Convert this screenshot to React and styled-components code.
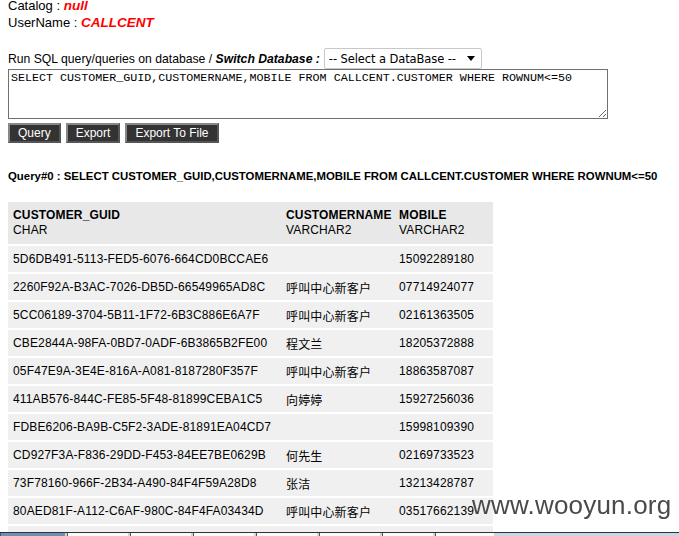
import React from 'react'
import styled, { createGlobalStyle } from 'styled-components'

const rows = [
  ['5D6DB491-5113-FED5-6076-664CD0BCCAE6', '', '15092289180'],
  ['2260F92A-B3AC-7026-DB5D-66549965AD8C', '呼叫中心新客户', '07714924077'],
  ['5CC06189-3704-5B11-1F72-6B3C886E6A7F', '呼叫中心新客户', '02161363505'],
  ['CBE2844A-98FA-0BD7-0ADF-6B3865B2FE00', '程文兰', '18205372888'],
  ['05F47E9A-3E4E-816A-A081-8187280F357F', '呼叫中心新客户', '18863587087'],
  ['411AB576-844C-FE85-5F48-81899CEBA1C5', '向婷婷', '15927256036'],
  ['FDBE6206-BA9B-C5F2-3ADE-81891EA04CD7', '', '15998109390'],
  ['CD927F3A-F836-29DD-F453-84EE7BE0629B', '何先生', '02169733523'],
  ['73F78160-966F-2B34-A490-84F4F59A28D8', '张洁', '13213428787'],
  ['80AED81F-A112-C6AF-980C-84F4FA03434D', '呼叫中心新客户', '03517662139'],
  ['', '', ''],
]

const columns = [
  { name: 'CUSTOMER_GUID', type: 'CHAR', width: 273 },
  { name: 'CUSTOMERNAME', type: 'VARCHAR2', width: 113 },
  { name: 'MOBILE', type: 'VARCHAR2', width: 99 },
]

const sql = 'SELECT CUSTOMER_GUID,CUSTOMERNAME,MOBILE FROM CALLCENT.CUSTOMER WHERE ROWNUM<=50'

const taskButtons = [64, 60, 60, 60, 60, 60, 50, 58]

function App() {
  return (
    <>
      <GlobalStyle />
      <Page>
        <InfoLine>Catalog : <Value>null</Value></InfoLine>
        <InfoLine>UserName : <Value>CALLCENT</Value></InfoLine>

        <SwitchRow>
          <span>Run SQL query/queries on database / <Em>Switch Database :</Em></span>
          <DbSelect>
            <span>-- Select a DataBase --</span>
            <svg width="8" height="5" viewBox="0 0 8 5"><path d="M0 0h8L4 5z" fill="#000" /></svg>
          </DbSelect>
        </SwitchRow>
        <SqlBox defaultValue={sql} spellCheck={false} />

        <ButtonRow>
          <DarkButton>Query</DarkButton>
          <DarkButton>Export</DarkButton>
          <DarkButton>Export To File</DarkButton>
        </ButtonRow>

        <QueryTitle>Query#0 : {sql}</QueryTitle>

        <ResultTable>
          <colgroup>
            {columns.map(c => <col key={c.name} style={{ width: c.width }} />)}
          </colgroup>
          <thead>
            <tr>
              {columns.map(c => (
                <HeadCell key={c.name}>
                  <b>{c.name}</b>
                  <br />
                  {c.type}
                </HeadCell>
              ))}
            </tr>
          </thead>
          <tbody>
            {rows.map((r, i) => (
              <tr key={i}>
                {r.map((v, j) => <Cell key={j}>{v}</Cell>)}
              </tr>
            ))}
          </tbody>
        </ResultTable>
      </Page>

      <Watermark>www.wooyun.org</Watermark>
      <Taskbar>
        {taskButtons.map((w, i) => <TaskItem key={i} w={w} first={i === 0} />)}
      </Taskbar>
    </>
  )
}

export default App

const GlobalStyle = createGlobalStyle`
  html, body {
    margin: 0;
    padding: 0;
    background: #fff;
    overflow: hidden;
  }
  body {
    font-family: "Liberation Sans", Arial, sans-serif;
    font-size: 13px;
    color: #000;
  }
`

const Page = styled.div`
  display: flex;
  flex-direction: column;
  align-items: flex-start;
  padding: 0 8px;
  margin-top: -3px;
`

const InfoLine = styled.div`
  line-height: 17px;
  height: 17px;
`

const Value = styled.span`
  color: #ff0000;
  font-weight: bold;
  font-style: italic;
  font-size: 13.5px;
`

const SwitchRow = styled.div`
  display: flex;
  align-items: center;
  gap: 4px;
  margin-top: 17px;
  height: 21px;
  font-size: 12.2px;
  white-space: nowrap;
`

const Em = styled.span`
  font-weight: bold;
  font-style: italic;
`

const DbSelect = styled.div`
  display: flex;
  align-items: center;
  justify-content: space-between;
  box-sizing: border-box;
  width: 158px;
  height: 21px;
  padding: 0 6px 0 4px;
  border: 1px solid #c8c8c8;
  border-radius: 2px;
  font-family: "DejaVu Sans", Tahoma, sans-serif;
  font-size: 11.5px;
  letter-spacing: -0.1px;
`

const SqlBox = styled.textarea`
  box-sizing: border-box;
  width: 600px;
  height: 50px;
  margin: 0;
  padding: 2px;
  border: 1px solid #707070;
  font-family: "Liberation Mono", "Courier New", monospace;
  font-size: 11.7px;
  line-height: 13px;
  resize: both;
  outline: none;
`

const ButtonRow = styled.div`
  display: flex;
  gap: 5px;
  margin-top: 4px;
`

const DarkButton = styled.button`
  height: 20px;
  padding: 0 8px;
  background: #333;
  color: #fff;
  border: 2px solid;
  border-color: #888 #555 #555 #888;
  font-family: "Liberation Sans", Arial, sans-serif;
  font-size: 12px;
  line-height: 14px;
  cursor: pointer;
`

const QueryTitle = styled.div`
  margin-top: 26px;
  font-weight: bold;
  font-size: 11.4px;
  line-height: 15px;
  white-space: nowrap;
`

const ResultTable = styled.table`
  width: 485px;
  margin-top: 18px;
  border-collapse: collapse;
  table-layout: fixed;
  font-size: 12px;
  letter-spacing: 0.15px;
`

const HeadCell = styled.th`
  background: #e8e8e8;
  text-align: left;
  font-weight: normal;
  padding: 5px;
  line-height: 15px;
  height: 32px;
  border-bottom: 2px solid #fff;
  vertical-align: middle;
  white-space: nowrap;
  b {
    font-weight: bold;
  }
`

const Cell = styled.td`
  background: #f0f0f0;
  padding: 0 5px;
  height: 26px;
  border-bottom: 2px solid #fff;
  white-space: nowrap;
  font-family: "Liberation Sans", Arial, "Noto Sans CJK SC", sans-serif;
`

const Watermark = styled.div`
  position: fixed;
  left: 472px;
  top: 490px;
  font-family: "Liberation Sans", Arial, sans-serif;
  font-size: 26px;
  color: #4a4a4a;
  letter-spacing: 0.2px;
`

const Taskbar = styled.div`
  position: fixed;
  left: 0;
  right: 0;
  bottom: 0;
  height: 3px;
  display: flex;
  gap: 2px;
  background: #c9d6e8;
  border-top: 1px solid #333;
`

const TaskItem = styled.div`
  width: ${p => p.w}px;
  background: ${p => (p.first ? '#6f8fb5' : '#fafafa')};
  border-left: 1px solid #555;
`
